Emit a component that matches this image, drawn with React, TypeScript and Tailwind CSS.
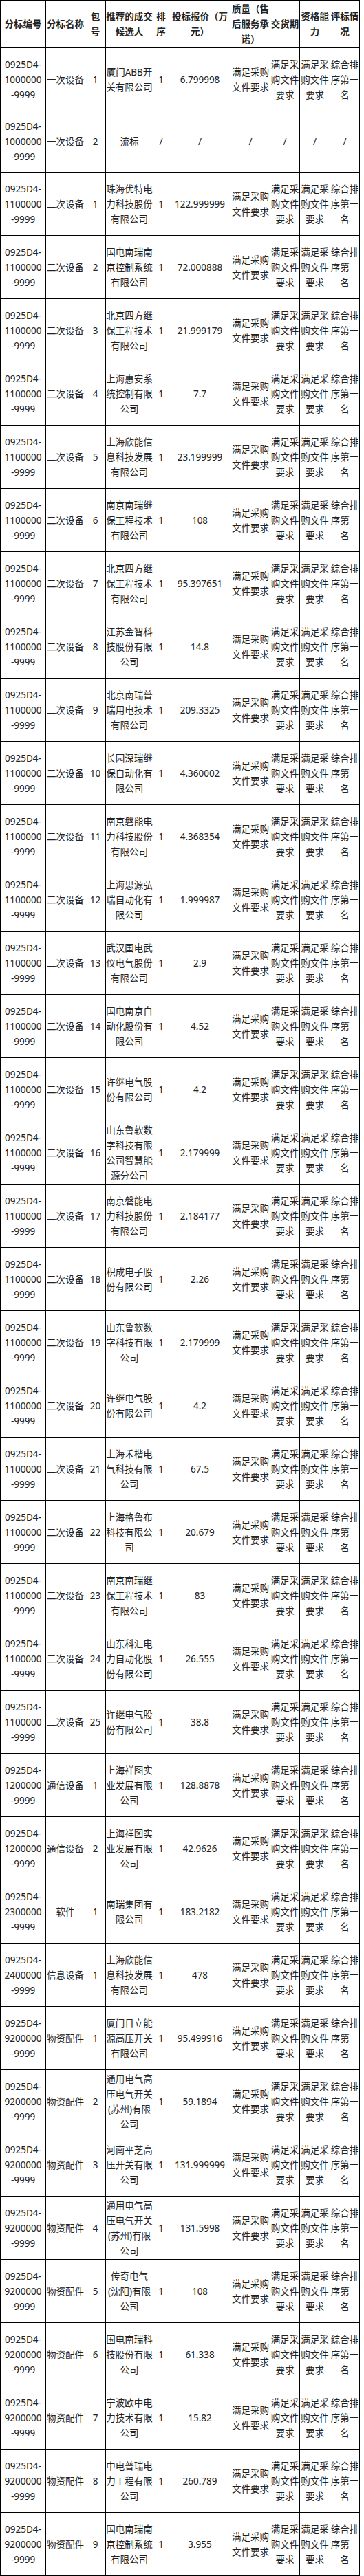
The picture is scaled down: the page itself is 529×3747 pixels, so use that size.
import React from 'react';

type Row = {
  code: string;
  name: string;
  pkg: string;
  company: string[];
  price: string;
  failed?: boolean;
};

const headers: string[][] = [
  ['分标编号'],
  ['分标名称'],
  ['包', '号'],
  ['推荐的成交', '候选人'],
  ['排', '序'],
  ['投标报价（万', '元）'],
  ['质量（售', '后服务承', '诺）'],
  ['交货期'],
  ['资格能', '力'],
  ['评标情', '况'],
];

const rows: Row[] = [
  { code: '1000000', name: '一次设备', pkg: '1', company: ['厦门ABB开', '关有限公司'], price: '6.799998' },
  { code: '1000000', name: '一次设备', pkg: '2', company: ['流标'], price: '/', failed: true },
  { code: '1100000', name: '二次设备', pkg: '1', company: ['珠海优特电', '力科技股份', '有限公司'], price: '122.999999' },
  { code: '1100000', name: '二次设备', pkg: '2', company: ['国电南瑞南', '京控制系统', '有限公司'], price: '72.000888' },
  { code: '1100000', name: '二次设备', pkg: '3', company: ['北京四方继', '保工程技术', '有限公司'], price: '21.999179' },
  { code: '1100000', name: '二次设备', pkg: '4', company: ['上海惠安系', '统控制有限', '公司'], price: '7.7' },
  { code: '1100000', name: '二次设备', pkg: '5', company: ['上海欣能信', '息科技发展', '有限公司'], price: '23.199999' },
  { code: '1100000', name: '二次设备', pkg: '6', company: ['南京南瑞继', '保工程技术', '有限公司'], price: '108' },
  { code: '1100000', name: '二次设备', pkg: '7', company: ['北京四方继', '保工程技术', '有限公司'], price: '95.397651' },
  { code: '1100000', name: '二次设备', pkg: '8', company: ['江苏金智科', '技股份有限', '公司'], price: '14.8' },
  { code: '1100000', name: '二次设备', pkg: '9', company: ['北京南瑞普', '瑞用电技术', '有限公司'], price: '209.3325' },
  { code: '1100000', name: '二次设备', pkg: '10', company: ['长园深瑞继', '保自动化有', '限公司'], price: '4.360002' },
  { code: '1100000', name: '二次设备', pkg: '11', company: ['南京磐能电', '力科技股份', '有限公司'], price: '4.368354' },
  { code: '1100000', name: '二次设备', pkg: '12', company: ['上海思源弘', '瑞自动化有', '限公司'], price: '1.999987' },
  { code: '1100000', name: '二次设备', pkg: '13', company: ['武汉国电武', '仪电气股份', '有限公司'], price: '2.9' },
  { code: '1100000', name: '二次设备', pkg: '14', company: ['国电南京自', '动化股份有', '限公司'], price: '4.52' },
  { code: '1100000', name: '二次设备', pkg: '15', company: ['许继电气股', '份有限公司'], price: '4.2' },
  { code: '1100000', name: '二次设备', pkg: '16', company: ['山东鲁软数', '字科技有限', '公司智慧能', '源分公司'], price: '2.179999' },
  { code: '1100000', name: '二次设备', pkg: '17', company: ['南京磐能电', '力科技股份', '有限公司'], price: '2.184177' },
  { code: '1100000', name: '二次设备', pkg: '18', company: ['积成电子股', '份有限公司'], price: '2.26' },
  { code: '1100000', name: '二次设备', pkg: '19', company: ['山东鲁软数', '字科技有限', '公司'], price: '2.179999' },
  { code: '1100000', name: '二次设备', pkg: '20', company: ['许继电气股', '份有限公司'], price: '4.2' },
  { code: '1100000', name: '二次设备', pkg: '21', company: ['上海禾楷电', '气科技有限', '公司'], price: '67.5' },
  { code: '1100000', name: '二次设备', pkg: '22', company: ['上海格鲁布', '科技有限公', '司'], price: '20.679' },
  { code: '1100000', name: '二次设备', pkg: '23', company: ['南京南瑞继', '保工程技术', '有限公司'], price: '83' },
  { code: '1100000', name: '二次设备', pkg: '24', company: ['山东科汇电', '力自动化股', '份有限公司'], price: '26.555' },
  { code: '1100000', name: '二次设备', pkg: '25', company: ['许继电气股', '份有限公司'], price: '38.8' },
  { code: '1200000', name: '通信设备', pkg: '1', company: ['上海祥图实', '业发展有限', '公司'], price: '128.8878' },
  { code: '1200000', name: '通信设备', pkg: '2', company: ['上海祥图实', '业发展有限', '公司'], price: '42.9626' },
  { code: '2300000', name: '软件', pkg: '1', company: ['南瑞集团有', '限公司'], price: '183.2182' },
  { code: '2400000', name: '信息设备', pkg: '1', company: ['上海欣能信', '息科技发展', '有限公司'], price: '478' },
  { code: '9200000', name: '物资配件', pkg: '1', company: ['厦门日立能', '源高压开关', '有限公司'], price: '95.499916' },
  { code: '9200000', name: '物资配件', pkg: '2', company: ['通用电气高', '压电气开关', '(苏州)有限', '公司'], price: '59.1894' },
  { code: '9200000', name: '物资配件', pkg: '3', company: ['河南平芝高', '压开关有限', '公司'], price: '131.999999' },
  { code: '9200000', name: '物资配件', pkg: '4', company: ['通用电气高', '压电气开关', '(苏州)有限', '公司'], price: '131.5998' },
  { code: '9200000', name: '物资配件', pkg: '5', company: ['传奇电气', '(沈阳)有限', '公司'], price: '108' },
  { code: '9200000', name: '物资配件', pkg: '6', company: ['国电南瑞科', '技股份有限', '公司'], price: '61.338' },
  { code: '9200000', name: '物资配件', pkg: '7', company: ['宁波欧中电', '力技术有限', '公司'], price: '15.82' },
  { code: '9200000', name: '物资配件', pkg: '8', company: ['中电普瑞电', '力工程有限', '公司'], price: '260.789' },
  { code: '9200000', name: '物资配件', pkg: '9', company: ['国电南瑞南', '京控制系统', '有限公司'], price: '3.955' },
];

function Cell({ lines, height, bold }: { lines: string[]; height: string; bold?: boolean }) {
  return (
    <div
      className={`${height} border-r border-b border-black flex flex-col items-center justify-center text-center leading-[22px] ${
        bold ? 'font-bold' : ''
      }`}
    >
      {lines.map((l, i) => (
        <span key={i} className="whitespace-nowrap">
          {l}
        </span>
      ))}
    </div>
  );
}

export default function App() {
  return (
    <div className="min-h-screen bg-white text-[#222] text-[13.5px] font-['Noto_Sans','Noto_Sans_CJK_SC',sans-serif]">
      <div className="grid grid-cols-[66px_57px_30px_69px_23px_90px_57px_43px_44px_43px] w-[523px] border-l border-t border-black">
        {headers.map((h, i) => (
          <Cell key={i} lines={h} height="h-[69px]" bold />
        ))}
        {rows.map((r, i) => {
          const h = r.failed ? 'h-[89px]' : 'h-[92px]';
          const ok = (lines: string[]) => (r.failed ? ['/'] : lines);
          return (
            <React.Fragment key={i}>
              <Cell lines={['0925D4-', r.code, '-9999']} height={h} />
              <Cell lines={[r.name]} height={h} />
              <Cell lines={[r.pkg]} height={h} />
              <Cell lines={r.company} height={h} />
              <Cell lines={ok(['1'])} height={h} />
              <Cell lines={[r.price]} height={h} />
              <Cell lines={ok(['满足采购', '文件要求'])} height={h} />
              <Cell lines={ok(['满足采', '购文件', '要求'])} height={h} />
              <Cell lines={ok(['满足采', '购文件', '要求'])} height={h} />
              <Cell lines={ok(['综合排', '序第一', '名'])} height={h} />
            </React.Fragment>
          );
        })}
      </div>
    </div>
  );
}
